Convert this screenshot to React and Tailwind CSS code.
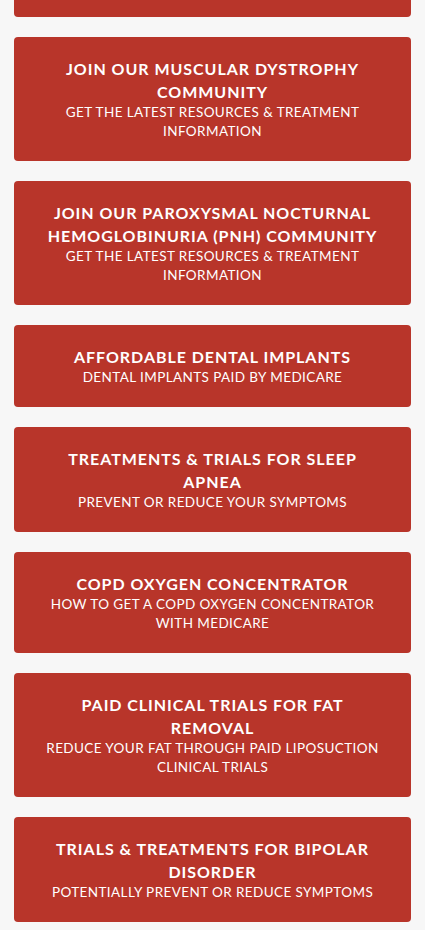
import React from "react";

const cards = [
  {
    title: "Join Our Muscular Dystrophy Community",
    sub: "Get the latest resources & treatment information",
  },
  {
    title: "Join Our Paroxysmal Nocturnal Hemoglobinuria (PNH) Community",
    sub: "Get the latest resources & treatment information",
  },
  { title: "Affordable Dental Implants", sub: "Dental implants paid by Medicare" },
  { title: "Treatments & Trials for Sleep Apnea", sub: "Prevent or reduce your symptoms" },
  {
    title: "COPD Oxygen Concentrator",
    sub: "How to get a COPD oxygen concentrator with Medicare",
  },
  {
    title: "Paid Clinical Trials for Fat Removal",
    sub: "Reduce your fat through paid liposuction clinical trials",
  },
  {
    title: "Trials & Treatments for Bipolar Disorder",
    sub: "Potentially prevent or reduce symptoms",
  },
];

export default function App() {
  return (
    <div
      className="min-h-screen bg-[#f7f7f7] px-[14px] pb-10"
      style={{ fontFamily: "Lato, 'Noto Sans', sans-serif" }}
    >
      {/* tail of the card above, scrolled off */}
      <div className="h-[17px] rounded-b-[4px] bg-[#b8352a]" />
      <div className="flex flex-col gap-5 pt-5">
        {cards.map((c) => (
          <a
            key={c.title}
            href="#"
            className="block rounded-[4px] bg-[#b8352a] px-8 py-5 text-center uppercase text-white"
          >
            <div className="text-[16px] font-bold leading-[23px] tracking-[0.06em]">
              {c.title}
            </div>
            <div className="text-[13.5px] leading-[19px] tracking-[0.03em]">{c.sub}</div>
          </a>
        ))}
      </div>
    </div>
  );
}
